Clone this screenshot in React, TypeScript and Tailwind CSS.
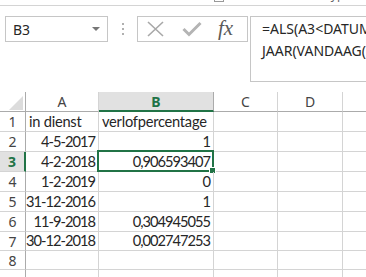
import React from 'react';

const cellFont = { fontFamily: 'Lato, Carlito, "Liberation Sans", sans-serif' };

const rows = [
  { n: 1, a: 'in dienst', b: 'verlofpercentage', text: true, h: 'h-[20px]' },
  { n: 2, a: '4-5-2017', b: '1', h: 'h-[20px]' },
  { n: 3, a: '4-2-2018', b: '0,906593407', h: 'h-[20px]' },
  { n: 4, a: '1-2-2019', b: '0', h: 'h-[20px]' },
  { n: 5, a: '31-12-2016', b: '1', h: 'h-[20px]' },
  { n: 6, a: '11-9-2018', b: '0,304945055', h: 'h-[20px]' },
  { n: 7, a: '30-12-2018', b: '0,002747253', h: 'h-[19px]' },
  { n: 8, a: '', b: '', h: 'h-[19px]' },
  { n: 0, a: '', b: '', h: 'h-[19px]' },
];

const App: React.FC = () => {
  return (
    <div className="w-[366px] h-[277px] overflow-hidden bg-white text-[#262626]" style={{ fontFamily: '"Noto Sans", "Open Sans", sans-serif' }}>
      {/* ribbon group labels, cut off */}
      <div className="relative h-[5px] overflow-hidden text-[12px] text-[#666]">
        <span className="absolute left-[80px] top-[-14px]">Klembord</span>
        <span className="absolute left-[214px] top-[-8px] w-[10px] h-[10px] border border-[#999]" />
        <span className="absolute left-[293px] top-[-14px]">Lettertype</span>
      </div>
      <div className="h-px bg-[#d4d4d4]" />

      {/* formula bar */}
      <div className="flex items-start mt-[10px] h-[65px]">
        <div className="shrink-0 ml-[5px] w-[103px] h-[26px] border border-[#c6c6c6] flex items-center justify-between pl-[7px] pr-[7px] text-[14px] text-[#262626]">
          <span>B3</span>
          <span className="w-0 h-0 border-l-[4px] border-r-[4px] border-t-[4px] border-l-transparent border-r-transparent border-t-[#777]" />
        </div>
        <div className="shrink-0 w-[29px] h-[26px] flex flex-col items-center justify-center gap-[3px]">
          <span className="w-[2px] h-[2px] bg-[#b0b0b0]" />
          <span className="w-[2px] h-[2px] bg-[#b0b0b0]" />
          <span className="w-[2px] h-[2px] bg-[#b0b0b0]" />
        </div>
        <div className="shrink-0 w-[111px] h-[26px] border border-[#c6c6c6] flex items-center pl-[8px]">
          <svg width="20" height="16" viewBox="0 0 20 16" className="shrink-0 mr-[16px]">
            <path d="M2 1 L17 15 M17 1 L2 15" stroke="#a8a8a8" strokeWidth="1.6" fill="none" />
          </svg>
          <svg width="20" height="16" viewBox="0 0 20 16" className="shrink-0 mr-[16px]">
            <path d="M1.5 8 L7 13.5 L18.5 2" stroke="#b4b4b4" strokeWidth="3" fill="none" />
          </svg>
          <span className="text-[21px] italic leading-none text-[#5a5a5a] -mt-[2px]" style={{ fontFamily: '"Liberation Serif", "DejaVu Serif", serif' }}>
            fx
          </span>
        </div>
        <div className="shrink-0 ml-[2px] w-[140px] h-[66px] border border-[#c6c6c6] pl-[11px] pt-[1px] text-[14px] leading-[22px] text-[#262626] overflow-hidden whitespace-nowrap">
          <div>=ALS(A3&lt;DATUM(</div>
          <div>JAAR(VANDAAG(</div>
        </div>
      </div>

      {/* sheet */}
      <div className="mt-[11px] w-[420px]">
        {/* column headers */}
        <div className="flex h-[20px] text-[14px] text-[#444]">
          <div className="shrink-0 relative w-[26px] border-r border-b border-r-[#ababab] border-b-[#ababab]">
            <svg width="16" height="14" viewBox="0 0 16 14" className="absolute right-[1px] bottom-[1px]">
              <path d="M15 0 L15 14 L1 14 Z" fill="#dcdcdc" />
            </svg>
          </div>
          <div className="shrink-0 w-[73px] border-r border-b border-r-[#d4d4d4] border-b-[#ababab] flex items-center justify-center">A</div>
          <div className="shrink-0 w-[115px] bg-[#e1e1e1] border-r border-r-[#ababab] border-b-2 border-b-[#217346] flex items-center justify-center font-bold text-[#217346]">B</div>
          <div className="shrink-0 w-[64px] border-r border-b border-r-[#d4d4d4] border-b-[#ababab] flex items-center justify-center">C</div>
          <div className="shrink-0 w-[65px] border-r border-b border-r-[#d4d4d4] border-b-[#ababab] flex items-center justify-center">D</div>
          <div className="flex-1 border-b border-b-[#ababab]" />
        </div>

        {rows.map((r, i) => {
          const sel = r.n === 3;
          const num = r.text ? 'justify-start tracking-[-0.25px]' : 'justify-end tracking-[-1px]';
          return (
            <div key={i} className={`flex ${r.h} text-[14.67px] whitespace-nowrap`}>
              <div
                className={`shrink-0 w-[26px] border-b border-b-[#d4d4d4] flex items-center justify-center text-[14px] ${
                  sel ? 'bg-[#e1e1e1] border-r-2 border-r-[#217346] font-bold text-[#217346]' : 'border-r border-r-[#ababab] text-[#444]'
                }`}
              >
                {r.n > 0 ? r.n : ''}
              </div>
              <div className={`shrink-0 w-[73px] border-r border-b border-[#d4d4d4] flex items-center px-[3px] ${num}`} style={cellFont}>
                {r.a}
              </div>
              <div className={`shrink-0 relative w-[115px] border-r border-b border-[#d4d4d4] flex items-center px-[3px] ${num}`} style={cellFont}>
                {r.b}
                {sel && (
                  <>
                    <div className="absolute left-[-2px] top-[-2px] right-[-1px] bottom-[-1px] border-2 border-[#217346]" />
                    <div className="absolute right-[-3px] bottom-[-3px] w-[5px] h-[5px] bg-[#217346] border border-white box-content" />
                  </>
                )}
              </div>
              <div className="shrink-0 w-[64px] border-r border-b border-[#d4d4d4]" />
              <div className="shrink-0 w-[65px] border-r border-b border-[#d4d4d4]" />
              <div className="flex-1 border-b border-[#d4d4d4]" />
            </div>
          );
        })}
      </div>
    </div>
  );
};

export default App;
